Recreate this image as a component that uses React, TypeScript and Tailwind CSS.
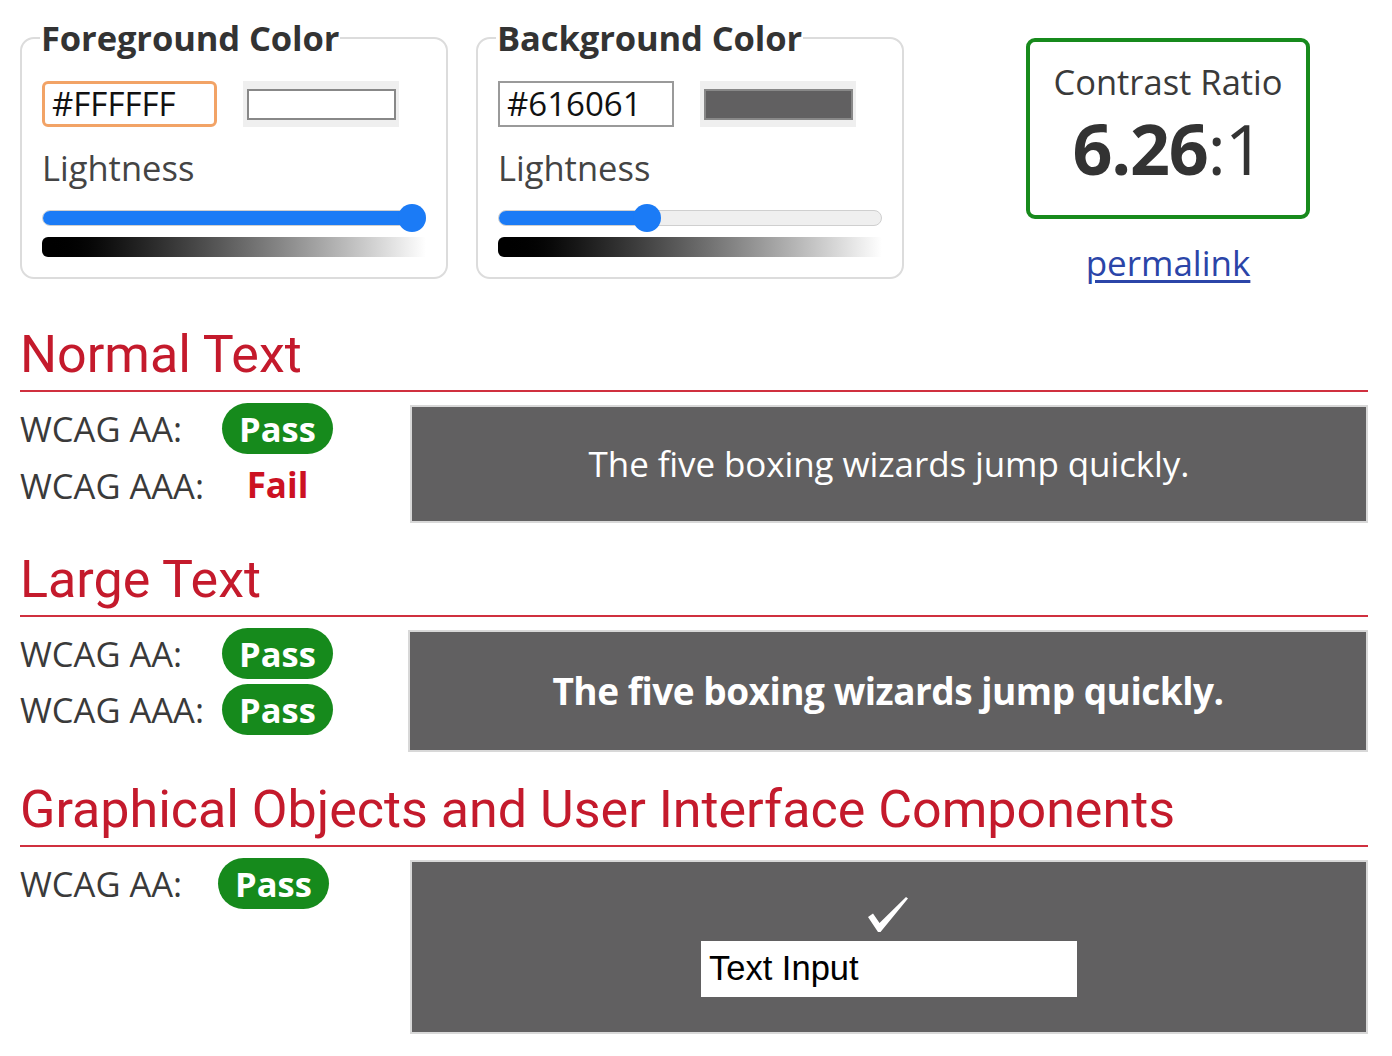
import React from "react";

function Slider({ pct }: { pct: number }) {
  return (
    <div className="relative h-[30px] w-[384px] flex items-center">
      <div className="h-[16px] w-full rounded-full bg-[#efefef] border border-[#cfcfcf] overflow-hidden">
        <div className="h-full bg-[#1b7bf6]" style={{ width: `${pct}%` }} />
      </div>
      <div
        className="absolute top-[1px] h-[28px] w-[28px] rounded-full bg-[#1b7bf6] -translate-x-1/2"
        style={{ left: `${pct === 100 ? 96.3 : pct}%` }}
      />
    </div>
  );
}

function ColorField({
  title,
  hex,
  swatch,
  active,
  pct,
}: {
  title: string;
  hex: string;
  swatch: string;
  active?: boolean;
  pct: number;
}) {
  return (
    <fieldset className="w-[427px] h-[261px] border-2 border-[#dcdcdc] rounded-[14px] pl-[18px] pr-[20px]">
      <legend className="px-[1px] font-bold text-[34.5px] leading-[40px] text-[#333] tracking-[-0.1px]">{title}</legend>
      <div className="flex items-center mt-[23px] ml-[2px]">
        <div
          className={
            active
              ? "w-[175px] h-[46px] border-[3px] border-[#f2a366] rounded-[6px] pl-[7px] flex items-center text-[33px] text-[#111]"
              : "w-[176px] h-[46px] border-2 border-[#9a9a9a] pl-[7px] flex items-center text-[33px] text-[#111]"
          }
        >
          {hex}
        </div>
        <div className="ml-[26px] w-[156px] h-[46px] bg-[#efefef] flex items-center justify-center">
          <div className="w-[149px] h-[31px] border-2 border-[#888]" style={{ background: swatch }} />
        </div>
      </div>
      <div className="mt-[21px] ml-[2px] text-[34.5px] leading-[40px] text-[#444]">Lightness</div>
      <div className="mt-[15px] ml-[2px]">
        <Slider pct={pct} />
      </div>
      <div className="mt-[4px] ml-[2px] h-[20px] w-[384px] rounded-l-[6px] bg-gradient-to-r from-black to-white" />
    </fieldset>
  );
}

function Pill({ children }: { children: React.ReactNode }) {
  return (
    <div className="w-[111px] h-[51px] rounded-full bg-[#168a1c] text-white font-bold text-[34.5px] flex items-center justify-center">
      {children}
    </div>
  );
}

function Row({ label, result }: { label: string; result: "pass" | "fail" }) {
  return (
    <div className="flex items-center h-[51px]">
      <div className="w-[202px] text-[34.5px] text-[#3a3a3a]">{label}</div>
      {result === "pass" ? (
        <Pill>Pass</Pill>
      ) : (
        <div className="w-[111px] text-center font-bold text-[35px] text-[#cc1122]">Fail</div>
      )}
    </div>
  );
}

function Heading({ children, mt }: { children: React.ReactNode; mt: string }) {
  return (
    <h2
      className={`${mt} font-['Roboto'] text-[52px] leading-[58px] text-[#c41a2c] pb-[6px] border-b-2 border-[#d0303f]`}
    >
      {children}
    </h2>
  );
}

function Check() {
  return (
    <svg width="42" height="37" viewBox="0 0 42 37" className="block">
      <path d="M1 21 L6 17.5 L12.5 27 L39 1 L41 2.5 L13.5 36 L11 36 Z" fill="white" />
    </svg>
  );
}

export default function App() {
  return (
    <div className="w-[1392px] h-[1056px] bg-white overflow-hidden font-['Open_Sans','Noto_Sans',sans-serif] text-[#333]">
      <div className="pl-[20px] w-[1368px]">
        <div className="flex items-start pt-[18px]">
          <ColorField title="Foreground Color" hex="#FFFFFF" swatch="#ffffff" active pct={100} />
          <div className="ml-[28px]">
            <ColorField title="Background Color" hex="#616061" swatch="#616061" pct={38.8} />
          </div>
          <div className="ml-[122px] mt-[20px] flex flex-col items-center">
            <div className="w-[284px] h-[181px] border-[4px] border-[#178a1c] rounded-[9px] flex flex-col items-center pt-[20px]">
              <div className="text-[34.5px] leading-[40px] text-[#3a3a3a]">Contrast Ratio</div>
              <div className="text-[70px] leading-[76px] text-[#333] mt-[8px] tracking-[-1.2px]">
                <span className="font-bold">6.26</span>:1
              </div>
            </div>
            <a className="mt-[22px] text-[35px] leading-[44px] text-[#2b45a8] underline underline-offset-[4px]">
              permalink
            </a>
          </div>
        </div>

        <Heading mt="mt-[41px]">Normal Text</Heading>
        <div className="flex mt-[13px]">
          <div className="w-[390px] flex flex-col gap-[6px] mt-[-2px]">
            <Row label="WCAG AA:" result="pass" />
            <Row label="WCAG AAA:" result="fail" />
          </div>
          <div className="flex-1 h-[118px] bg-[#616061] border-2 border-[#d8d8d8] flex items-center justify-center text-white text-[35px] tracking-[-0.1px]">
            The five boxing wizards jump quickly.
          </div>
        </div>

        <Heading mt="mt-[28px]">Large Text</Heading>
        <div className="flex mt-[13px]">
          <div className="w-[388px] flex flex-col gap-[5px] mt-[-2px]">
            <Row label="WCAG AA:" result="pass" />
            <Row label="WCAG AAA:" result="pass" />
          </div>
          <div className="flex-1 h-[122px] bg-[#616061] border-2 border-[#d8d8d8] flex items-center justify-center text-white font-bold text-[37px] tracking-[-0.5px]">
            The five boxing wizards jump quickly.
          </div>
        </div>

        <Heading mt="mt-[29px]">Graphical Objects and User Interface Components</Heading>
        <div className="flex mt-[13px]">
          <div className="w-[390px] flex flex-col mt-[-2px]">
            <div className="flex items-center h-[51px]">
              <div className="w-[198px] text-[34.5px] text-[#3a3a3a]">WCAG AA:</div>
              <Pill>Pass</Pill>
            </div>
          </div>
          <div className="flex-1 h-[174px] bg-[#616061] border-2 border-[#d8d8d8] flex flex-col items-center pt-[34px]">
            <div className="ml-[-2px]">
              <Check />
            </div>
            <div className="mt-[8px] w-[376px] h-[56px] bg-white flex items-center pl-[8px] font-['Liberation_Sans',Arial,sans-serif] text-[34.5px] text-black">
              Text Input
            </div>
          </div>
        </div>
      </div>
    </div>
  );
}
